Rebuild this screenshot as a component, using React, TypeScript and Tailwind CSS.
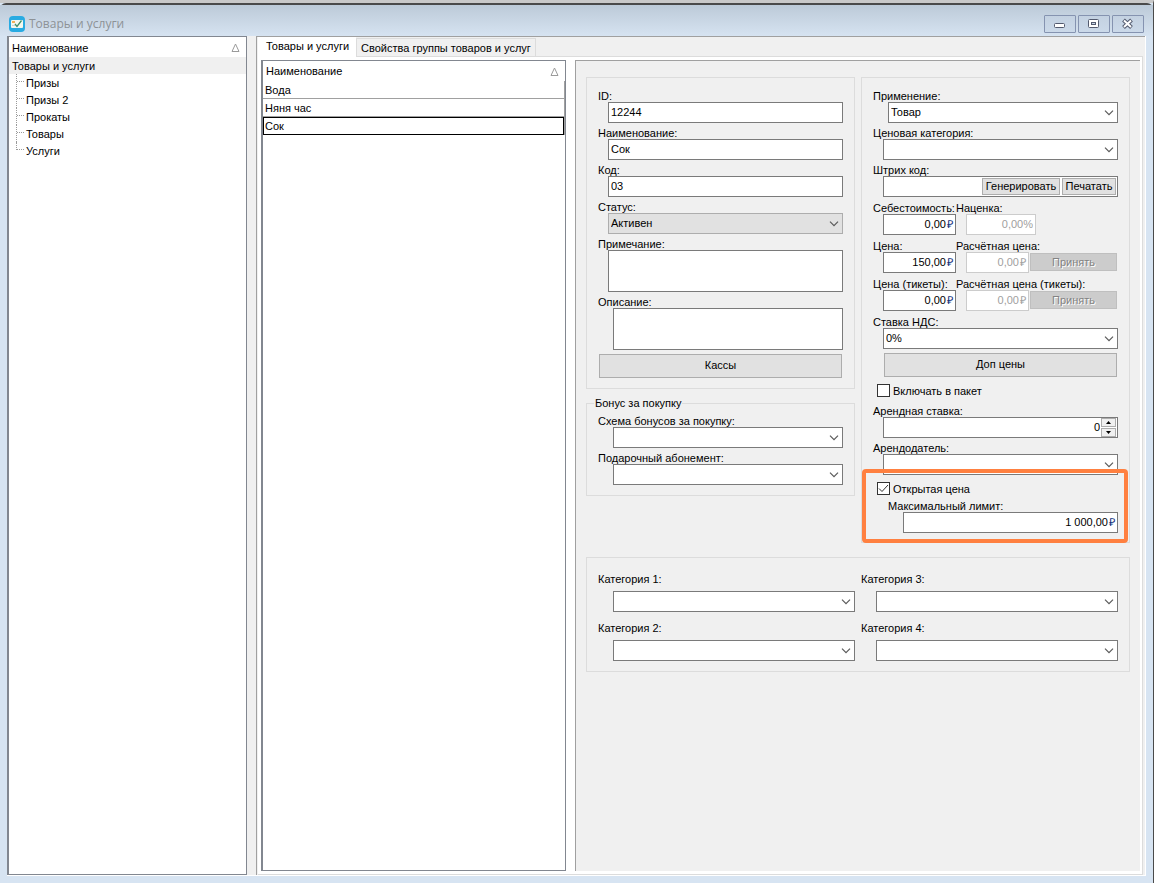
import { ReactNode, useId, useState } from "react";
import clsx from "clsx";

const groups = ["Призы", "Призы 2", "Прокаты", "Товары", "Услуги"];
const products = ["Вода", "Няня час", "Сок"];

function SortIcon() {
  return (
    <svg width="9" height="9" viewBox="0 0 9 9" fill="none" stroke="#9a9a9a">
      <path d="M4.5 1 L1 8.5 H8 Z" />
    </svg>
  );
}

function Logo() {
  return (
    <svg width="16" height="16" viewBox="0 0 16 16">
      <rect width="16" height="16" rx="4" fill="#29abe2" />
      <rect x="2" y="4" width="12" height="8" rx="1" fill="#f4f8ee" />
      <rect x="3" y="5" width="3" height="2" fill="#f2b05a" />
      <path d="M3 9.5 H6" stroke="#c9d3d8" />
      <path d="M6 8 L8 10.5 L12.5 4.5" fill="none" stroke="#3f8f6b" strokeWidth="1.3" />
    </svg>
  );
}

function WindowButton({ label, children }: { label: string; children: ReactNode }) {
  return (
    <button
      type="button"
      aria-label={label}
      className="flex h-[18px] w-8 items-center justify-center rounded-[1px] border border-[#8593b0] bg-gradient-to-b from-[#c3d1e1] to-[#cbd9e9]"
    >
      <svg width="14" height="12" viewBox="0 0 14 12" fill="none">
        {children}
      </svg>
    </button>
  );
}

function TitleBar() {
  return (
    <header className="flex h-[31px] items-center justify-between bg-gradient-to-b from-[#bccad8] to-[#d6e3f1] px-[9px] pt-[6px]">
      <div className="flex items-center gap-1">
        <Logo />
        <h1 className="font-['Open_Sans',sans-serif] text-[12px] leading-4 text-[#8d9296]">
          Товары и услуги
        </h1>
      </div>
      <div className="flex gap-[2px]">
        <WindowButton label="Свернуть">
          <rect x="1.5" y="5.5" width="10" height="4" rx="1" fill="#fff" stroke="#535a6e" />
        </WindowButton>
        <WindowButton label="Развернуть">
          <rect x="1.5" y="1.5" width="10" height="8" rx="1" fill="#fff" stroke="#535a6e" />
          <rect x="4.5" y="4.5" width="4" height="2" fill="#c7d5e5" stroke="#535a6e" />
        </WindowButton>
        <WindowButton label="Закрыть">
          <path d="M2.5 2 L10.5 9.5 M10.5 2 L2.5 9.5" stroke="#535a6e" strokeWidth="4" />
          <path d="M3 2.5 L10 9 M10 2.5 L3 9" stroke="#fff" strokeWidth="2" />
        </WindowButton>
      </div>
    </header>
  );
}

function GroupTree() {
  return (
    <nav className="w-60 shrink-0 border border-l-2 border-[#828790] bg-white">
      <div className="flex h-5 items-center justify-between pr-[6px] pl-[3px] leading-4">
        <span className="pt-px">Наименование</span>
        <SortIcon />
      </div>
      <div className="h-[17px] bg-[#f0f0f0] pl-[3px] leading-[18px]">Товары и услуги</div>
      <ul className="pl-[7px]">
        {groups.map((name, i) => (
          <li key={name} className="flex h-[17px] leading-[18px]">
            <span
              className={clsx(
                "w-px border-l border-dotted border-[#9a9a9a]",
                i === groups.length - 1 ? "h-2" : "h-[17px]"
              )}
            />
            <span className="mr-[2px] h-2 w-[7px] border-b border-dotted border-[#9a9a9a]" />
            {name}
          </li>
        ))}
      </ul>
    </nav>
  );
}

function ProductList() {
  const [selected, setSelected] = useState("Сок");

  return (
    <table className="w-full border-collapse">
      <thead>
        <tr className="h-5">
          <th className="p-0 pl-[3px] text-left font-normal">
            <div className="flex items-center justify-between pr-[6px]">
              Наименование
              <SortIcon />
            </div>
          </th>
        </tr>
      </thead>
      <tbody>
        {products.map((name) => (
          <tr key={name} onClick={() => setSelected(name)}>
            <td className="border-r border-[#a0a0a0] p-0">
              <div
                className={clsx(
                  "h-[18px]",
                  name === selected
                    ? "border border-black pl-px leading-4"
                    : "border-b border-[#a0a0a0] pl-[2px] leading-[18px]"
                )}
              >
                {name}
              </div>
            </td>
          </tr>
        ))}
      </tbody>
    </table>
  );
}

const box = "h-[21px] border border-[#7a7a7a] bg-white";

function Label({ id, children }: { id: string; children: ReactNode }) {
  return (
    <label htmlFor={id} className="block h-4 leading-5 whitespace-nowrap">
      {children}
    </label>
  );
}

type FieldProps = { label: string; value?: string; inset?: string };

function TextField({ label, value = "", inset = "ml-[10px]" }: FieldProps) {
  const id = useId();
  return (
    <div>
      <Label id={id}>{label}</Label>
      <div className={clsx(box, inset)}>
        <input
          id={id}
          defaultValue={value}
          className="block h-full w-full px-[2px] pb-px outline-none"
        />
      </div>
    </div>
  );
}

function AreaField({ label, inset = "ml-[10px]" }: FieldProps) {
  const id = useId();
  return (
    <div>
      <Label id={id}>{label}</Label>
      <div className={clsx("h-[42px] border border-[#7a7a7a] bg-white", inset)}>
        <textarea id={id} className="block h-full w-full resize-none px-[2px] outline-none" />
      </div>
    </div>
  );
}

function SelectBox({ id, value = "", gray }: { id: string; value?: string; gray?: boolean }) {
  return (
    <div className="relative">
      <select
        id={id}
        defaultValue={value}
        className={clsx(
          "block h-[21px] w-full appearance-none border pr-5 pb-px pl-[2px] outline-none",
          gray ? "border-[#adadad] bg-[#e1e1e1]" : "border-[#7a7a7a] bg-white"
        )}
      >
        <option>{value}</option>
      </select>
      <svg
        className="pointer-events-none absolute top-2 right-1"
        width="10"
        height="6"
        viewBox="0 0 10 6"
        fill="none"
        stroke="#5a5a5a"
        strokeWidth="1.2"
      >
        <path d="M1 0.7 L5 4.7 L9 0.7" />
      </svg>
    </div>
  );
}

function SelectField({
  label,
  value,
  inset = "ml-[10px]",
  gray,
}: FieldProps & { gray?: boolean }) {
  const id = useId();
  return (
    <div>
      <Label id={id}>{label}</Label>
      <div className={inset}>
        <SelectBox id={id} value={value} gray={gray} />
      </div>
    </div>
  );
}

function MoneyField({
  label,
  value,
  width = "",
  inset = "ml-[10px]",
  disabled,
  unit = "₽",
}: FieldProps & { width?: string; disabled?: boolean; unit?: string }) {
  const id = useId();
  return (
    <div className={width}>
      <Label id={id}>{label}</Label>
      <div
        className={clsx(
          "flex h-[21px] items-center border bg-white pr-[2px] pb-px",
          inset,
          disabled ? "border-[#cccccc] text-[#a0a0a0]" : "border-[#7a7a7a]"
        )}
      >
        <input
          id={id}
          defaultValue={value}
          disabled={disabled}
          className="h-full w-0 flex-1 text-right outline-none"
        />
        <span className={clsx(unit === "₽" && "pl-px", !disabled && "text-[#10307c]")}>
          {unit}
        </span>
      </div>
    </div>
  );
}

function PushButton({ children }: { children: ReactNode }) {
  return (
    <button
      type="button"
      className="mt-1 ml-px block h-6 w-full border border-[#adadad] bg-[#e1e1e1] pb-[2px]"
    >
      {children}
    </button>
  );
}

function AcceptButton() {
  return (
    <button
      type="button"
      disabled
      className="mr-px mb-[2px] ml-px h-[18px] flex-1 self-end border border-[#bfbfbf] bg-[#cccccc] text-[#838383] [text-shadow:1px_1px_0_#fff]"
    >
      Принять
    </button>
  );
}

function CheckField({ label, checked }: { label: string; checked?: boolean }) {
  const [on, setOn] = useState(!!checked);
  return (
    <label className="ml-1 flex h-[13px] items-center gap-[3px]">
      <span className="relative flex">
        <input
          type="checkbox"
          checked={on}
          onChange={() => setOn(!on)}
          className="size-[13px] appearance-none border border-[#333] bg-white"
        />
        {on && (
          <svg
            className="pointer-events-none absolute inset-0"
            width="13"
            height="13"
            viewBox="0 0 13 13"
            fill="none"
            stroke="#333"
          >
            <path d="M2 6.5 L5 9.5 L11 3" />
          </svg>
        )}
      </span>
      {label}
    </label>
  );
}

function BarcodeField() {
  const id = useId();
  const button = "h-full border border-[#adadad] bg-[#e1e1e1] leading-none whitespace-nowrap";
  return (
    <div>
      <Label id={id}>Штрих код:</Label>
      <div className={clsx(box, "ml-[10px] flex gap-[2px] p-px")}>
        <input id={id} className="h-full w-0 flex-1 outline-none" />
        <button type="button" className={clsx(button, "w-[78px]")}>
          Генерировать
        </button>
        <button type="button" className={clsx(button, "w-[54px]")}>
          Печатать
        </button>
      </div>
    </div>
  );
}

function RentField() {
  const id = useId();
  const [rate, setRate] = useState(0);
  const button =
    "flex h-[9px] w-[15px] items-center justify-center border border-[#adadad] bg-[#f0f0f0]";
  return (
    <div>
      <Label id={id}>Арендная ставка:</Label>
      <div className={clsx(box, "ml-[10px] flex pr-px")}>
        <input
          id={id}
          value={rate}
          onChange={(e) => setRate(Number(e.target.value) || 0)}
          className="h-full w-0 flex-1 pr-px pb-px text-right outline-none"
        />
        <div className="flex flex-col gap-px">
          <button type="button" aria-label="Больше" className={button} onClick={() => setRate(rate + 1)}>
            <svg width="5" height="3" viewBox="0 0 5 3">
              <path d="M0 3 L2.5 0 L5 3 Z" />
            </svg>
          </button>
          <button type="button" aria-label="Меньше" className={button} onClick={() => setRate(rate - 1)}>
            <svg width="5" height="3" viewBox="0 0 5 3">
              <path d="M0 0 L2.5 3 L5 0 Z" />
            </svg>
          </button>
        </div>
      </div>
    </div>
  );
}

const panel = "border border-[#dcdcdc] px-[11px]";

function MainPanel() {
  return (
    <section className={clsx(panel, "h-[312px] pt-2")}>
      <TextField label="ID:" value="12244" />
      <TextField label="Наименование:" value="Сок" />
      <TextField label="Код:" value="03" />
      <SelectField label="Статус:" value="Активен" gray />
      <AreaField label="Примечание:" />
      <AreaField label="Описание:" inset="ml-[15px]" />
      <div className="pr-[2px]">
        <PushButton>Кассы</PushButton>
      </div>
    </section>
  );
}

function BonusPanel() {
  return (
    <fieldset className="mt-[7px] border border-[#dcdcdc] px-[11px] pb-[10px]">
      <legend className="-ml-1 px-px leading-[15px]">Бонус за покупку</legend>
      <SelectField label="Схема бонусов за покупку:" inset="ml-[15px]" />
      <SelectField label="Подарочный абонемент:" inset="ml-[15px]" />
    </fieldset>
  );
}

function PricePanel() {
  return (
    <section className={clsx(panel, "relative pt-2 pb-[9px]")}>
      <SelectField label="Применение:" value="Товар" inset="ml-[15px]" />
      <SelectField label="Ценовая категория:" />
      <BarcodeField />
      <div className="mt-px flex">
        <MoneyField label="Себестоимость:" value="0,00" width="w-[83px]" />
        <MoneyField label="Наценка:" value="0,00" width="w-20" unit="%" disabled />
      </div>
      <div className="mt-px flex">
        <MoneyField label="Цена:" value="150,00" width="w-[83px]" />
        <MoneyField label="Расчётная цена:" value="0,00" width="w-[73px]" disabled />
        <AcceptButton />
      </div>
      <div className="mt-px flex">
        <MoneyField label="Цена (тикеты):" value="0,00" width="w-[83px]" />
        <MoneyField label="Расчётная цена (тикеты):" value="0,00" width="w-[73px]" disabled />
        <AcceptButton />
      </div>
      <div className="mt-px">
        <SelectField label="Ставка НДС:" value="0%" />
      </div>
      <div className="pr-[2px] pl-[10px]">
        <PushButton>Доп цены</PushButton>
      </div>
      <div className="mt-[7px] mb-1">
        <CheckField label="Включать в пакет" />
      </div>
      <RentField />
      <SelectField label="Арендодатель:" />
      <div className="mt-[7px] mb-px">
        <CheckField label="Открытая цена" checked />
      </div>
      <div className="pl-[15px]">
        <MoneyField label="Максимальный лимит:" value="1 000,00" inset="ml-[15px]" />
      </div>
      {/* highlight around the open price settings */}
      <div className="pointer-events-none absolute right-px -bottom-px left-0 h-[74px] rounded-sm border-4 border-[#ff8040]" />
    </section>
  );
}

function CategoryField({ label }: { label: string }) {
  const id = useId();
  return (
    <div>
      <label htmlFor={id} className="block h-5 leading-4">
        {label}
      </label>
      <div className="ml-[15px]">
        <SelectBox id={id} />
      </div>
    </div>
  );
}

function CategoryPanel() {
  return (
    <section
      className={clsx(
        panel,
        "mt-[14px] grid grid-flow-col grid-cols-2 grid-rows-2 gap-x-[6px] gap-y-2 pt-[13px] pb-[10px]"
      )}
    >
      <CategoryField label="Категория 1:" />
      <CategoryField label="Категория 2:" />
      <CategoryField label="Категория 3:" />
      <CategoryField label="Категория 4:" />
    </section>
  );
}

export default function App() {
  return (
    <div className="flex min-h-screen flex-col border-t-[3px] border-r border-t-[#c9c9c9] border-r-[#4a4a4a] bg-[#d7e4f2] font-['Liberation_Sans',Arial,sans-serif] text-[11px] leading-[14px] text-black">
      <div className="flex flex-1 flex-col rounded-t-md border-t-2 border-[#4a4a4a]">
        <TitleBar />
        <div className="mr-[7px] mb-[7px] ml-[7px] flex flex-1 border-r border-b border-white bg-[#f0f0f0]">
          <GroupTree />
          <main className="ml-[9px] flex flex-1 flex-col border-t border-l border-[#a0a0a0] pr-[2px] pl-px">
            <div role="tablist" className="flex h-5 items-end border-b border-[#dcdcdc]">
              <button
                type="button"
                role="tab"
                aria-selected
                className="-mb-px h-5 bg-white pr-[7px] pb-[2px] pl-2"
              >
                Товары и услуги
              </button>
              <button
                type="button"
                role="tab"
                aria-selected={false}
                className="h-[18px] border border-b-0 border-[#dcdcdc] px-1"
              >
                Свойства группы товаров и услуг
              </button>
            </div>
            <div className="flex flex-1 border-r border-b border-[#dcdcdc] bg-white pt-[3px] pr-[2px] pb-[3px] pl-[3px]">
              <div className="w-[305px] shrink-0 border border-l-2 border-[#828790]">
                <ProductList />
              </div>
              <div className="ml-[9px] flex-1 border-t border-l border-[#a0a0a0] bg-[#f0f0f0] px-[10px] pt-4">
                <div className="grid grid-cols-2 items-start gap-[6px]">
                  <div>
                    <MainPanel />
                    <BonusPanel />
                  </div>
                  <PricePanel />
                </div>
                <CategoryPanel />
              </div>
            </div>
          </main>
        </div>
      </div>
    </div>
  );
}
